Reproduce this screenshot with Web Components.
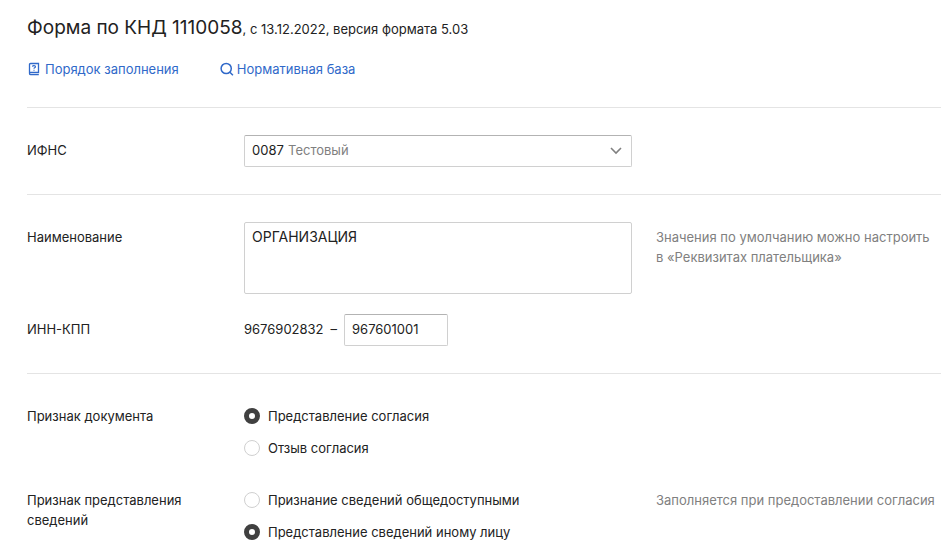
<!DOCTYPE html>
<html lang="ru">
<head>
<meta charset="UTF-8">
<meta name="viewport" content="width=device-width, initial-scale=1">
<title>Форма по КНД 1110058</title>
<style>
    body {
        margin: 0;
        background: #fff;
        color: #222;
        font: 13px/20px Inter, "Liberation Sans", sans-serif;
        --link: #3069c9;
        --muted: #808080;
        --line: #e4e4e4;
        --border: #d0d0d0;
        --border-top: #b3b3b3;
    }
</style>
</head>
<body>
<knd-form></knd-form>

<script>
class FormHeader extends HTMLElement {
    constructor() {
        super();
        this.attachShadow({ mode: 'open' });
        this.shadowRoot.innerHTML = `
            <style>
                :host {
                    display: block;
                    padding: 14px 0 28px;
                }
                h1 {
                    margin: 0 0 16px;
                    font-size: 13px;
                    font-weight: 400;
                    line-height: 28px;
                }
                .title {
                    font-size: 19px;
                }
                nav {
                    display: flex;
                    gap: 40px;
                }
            </style>
            <h1><span class="title"><slot name="title"></slot></span><slot name="version"></slot></h1>
            <nav><slot></slot></nav>
        `;
    }
}

class IconLink extends HTMLElement {
    constructor() {
        super();
        this.attachShadow({ mode: 'open' });
    }

    connectedCallback() {
        const icons = {
            book: `
                <path d="M2.5 12.2V3.6Q2.5 2.5 3.6 2.5H11.5V11.5H3.6Q2.5 11.5 2.5 12.5Q2.5 13.7 3.8 13.7H11.8" stroke-width="1.3"/>
                <path d="M5.4 5.6Q5.6 4.6 7 4.6Q8.5 4.6 8.5 5.7Q8.5 6.4 7.6 6.8Q7 7.1 7 7.8M7 8.8V9.8" stroke-width="1.1"/>`,
            search: `
                <circle cx="7.2" cy="7.5" r="5.1"/>
                <path d="M10.9 11.2L13.9 14.2"/>`
        };
        this.shadowRoot.innerHTML = `
            <style>
                :host {
                    display: block;
                }
                a {
                    display: flex;
                    align-items: center;
                    gap: 2px;
                    color: var(--link);
                    text-decoration: none;
                }
                svg {
                    width: 16px;
                    height: 16px;
                    fill: none;
                    stroke: currentColor;
                    stroke-width: 1.5;
                }
            </style>
            <a href="#"><svg viewBox="0 0 16 16" aria-hidden="true">${icons[this.getAttribute('icon')]}</svg><slot></slot></a>
        `;
    }
}

class FormSection extends HTMLElement {
    constructor() {
        super();
        this.attachShadow({ mode: 'open' });
        this.shadowRoot.innerHTML = `
            <style>
                :host {
                    display: grid;
                    gap: 20px;
                    padding: 27px 0;
                    border-top: 1px solid var(--line);
                }
            </style>
            <slot></slot>
        `;
    }
}

// Label on the left, control in the middle, optional hint on the right
class FormRow extends HTMLElement {
    constructor() {
        super();
        this.attachShadow({ mode: 'open' });
        this.shadowRoot.innerHTML = `
            <style>
                :host {
                    display: grid;
                    grid-template-columns: 193px minmax(0, 388px) minmax(0, 1fr);
                    column-gap: 24px;
                }
                .label, .hint {
                    padding-top: 5px;
                }
                .hint {
                    color: var(--muted);
                }
            </style>
            <div class="label"><slot name="label"></slot></div>
            <div><slot></slot></div>
            <div class="hint"><slot name="hint"></slot></div>
        `;
    }
}

class KndForm extends HTMLElement {
    constructor() {
        super();
        this.attachShadow({ mode: 'open' });
        this.shadowRoot.innerHTML = `
            <style>
                :host {
                    display: block;
                    padding-left: 27px;
                }
                select, input, textarea {
                    box-sizing: border-box;
                    margin: 0;
                    font: inherit;
                    color: inherit;
                    background: transparent;
                }
                select, .kpp, textarea {
                    display: block;
                    width: 100%;
                    height: 32px;
                    padding: 4px 7px 6px;
                    border: 1px solid var(--border);
                    border-top-color: var(--border-top);
                    border-radius: 2px;
                }
                textarea {
                    height: 72px;
                    border-top-color: var(--border);
                    font-size: 14px;
                    resize: none;
                }
                select {
                    appearance: none;
                }
                .select {
                    display: grid;
                    align-items: center;
                }
                .select > * {
                    grid-area: 1 / 1;
                }
                .picked {
                    display: flex;
                    justify-content: space-between;
                    align-items: center;
                    padding: 0 9px 2px 44px;
                    color: var(--muted);
                    pointer-events: none;
                }
                .picked svg {
                    width: 14px;
                    height: 14px;
                    fill: none;
                    stroke: currentColor;
                    stroke-width: 1.6;
                }
                .inn {
                    display: flex;
                    gap: 7px;
                }
                .inn span {
                    padding-top: 5px;
                }
                .kpp {
                    width: 104px;
                }
                .radio {
                    display: flex;
                    align-items: center;
                    gap: 8px;
                    padding: 5px 0 7px;
                }
                .radio input {
                    appearance: none;
                    width: 16px;
                    height: 16px;
                    border: 1px solid var(--border);
                    border-radius: 50%;
                }
                .radio input:checked {
                    border: 5px solid #404040;
                }
            </style>
            <form-header>
                <span slot="title">Форма по КНД 1110058</span>
                <span slot="version">, с 13.12.2022, версия формата 5.03</span>
                <icon-link icon="book">Порядок заполнения</icon-link>
                <icon-link icon="search">Нормативная база</icon-link>
            </form-header>
            <form>
                <form-section>
                    <form-row>
                        <label slot="label" for="ifns">ИФНС</label>
                        <div class="select">
                            <select id="ifns"><option>0087</option></select>
                            <div class="picked">
                                <span>Тестовый</span>
                                <svg viewBox="0 0 14 14" aria-hidden="true"><path d="M2 5L7 10L12 5"/></svg>
                            </div>
                        </div>
                    </form-row>
                </form-section>
                <form-section>
                    <form-row>
                        <label slot="label" for="name">Наименование</label>
                        <textarea id="name">ОРГАНИЗАЦИЯ</textarea>
                        <span slot="hint">Значения по умолчанию можно настроить в&nbsp;«Реквизитах плательщика»</span>
                    </form-row>
                    <form-row>
                        <label slot="label" for="kpp">ИНН-КПП</label>
                        <div class="inn">
                            <span>9676902832</span>
                            <span>–</span>
                            <input class="kpp" id="kpp" type="text" value="967601001">
                        </div>
                    </form-row>
                </form-section>
                <form-section>
                    <form-row>
                        <span slot="label" id="doc-label">Признак документа</span>
                        <div role="radiogroup" aria-labelledby="doc-label">
                            <label class="radio"><input type="radio" name="doc" checked>Представление согласия</label>
                            <label class="radio"><input type="radio" name="doc">Отзыв согласия</label>
                        </div>
                    </form-row>
                    <form-row>
                        <span slot="label" id="info-label">Признак представления сведений</span>
                        <div role="radiogroup" aria-labelledby="info-label">
                            <label class="radio"><input type="radio" name="info">Признание сведений общедоступными</label>
                            <label class="radio"><input type="radio" name="info" checked>Представление сведений иному лицу</label>
                        </div>
                        <span slot="hint">Заполняется при предоставлении согласия</span>
                    </form-row>
                </form-section>
            </form>
        `;
    }
}

customElements.define('form-header', FormHeader);
customElements.define('icon-link', IconLink);
customElements.define('form-section', FormSection);
customElements.define('form-row', FormRow);
customElements.define('knd-form', KndForm);
</script>
</body>
</html>
